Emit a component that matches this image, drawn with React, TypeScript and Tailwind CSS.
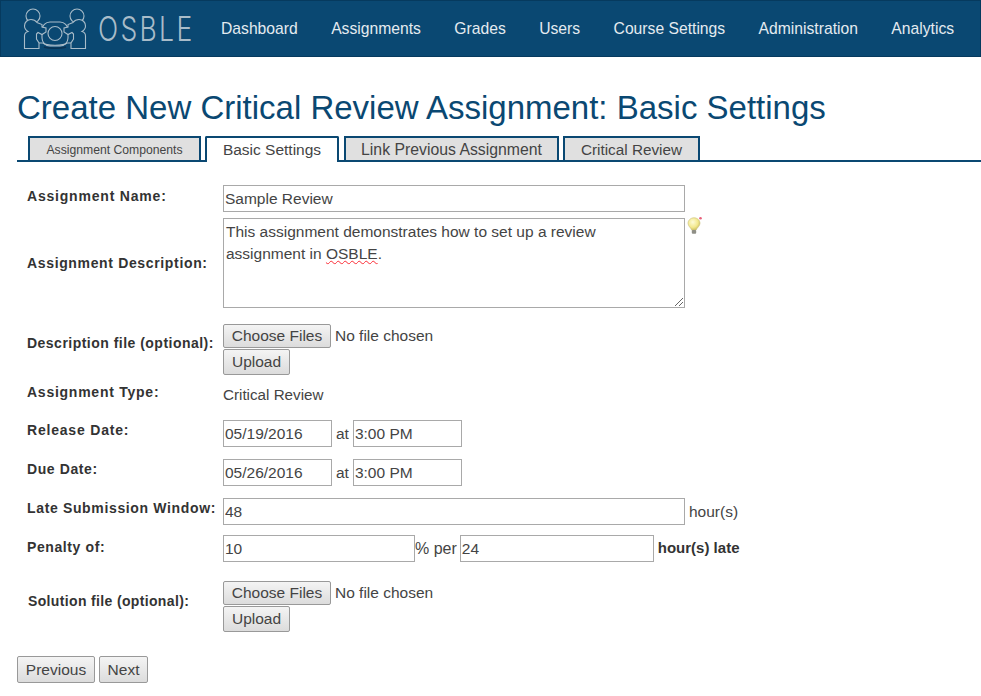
import React from "react";

const navItems = ["Dashboard", "Assignments", "Grades", "Users", "Course Settings", "Administration", "Analytics"];

function Logo() {
  return (
    <svg width="66" height="42" viewBox="23 7 66 42" fill="none" stroke="#a9bcc9" strokeWidth="1.1" className="shrink-0">
      <circle cx="33" cy="15" r="7" />
      <circle cx="77" cy="15" r="7" />
      <rect x="42" y="21" width="26" height="24" rx="8" />
      <circle cx="55" cy="32.5" r="7" />
      <path d="M39 47.5H24.500V35C24.500 32 26 31 28 30.500C25.500 29 24.500 27 24.500 25C24.500 21 27.500 18.500 31 18.500C33.500 18.500 35.500 19.500 37 21.500L42 23.500V26L46 27V31L42 33.500L38 31.500L36.500 33V38L39 42Z" fill="#0a4872" />
      <path d="M71 47.500H85.500V35C85.500 32 84 31 82 30.500C84.500 29 85.500 27 85.500 25C85.500 21 82.500 18.500 79 18.500C76.500 18.500 74.500 19.500 73 21.500L68 23.500V26L64 27V31L68 33.500L72 31.500L73.500 33V38L71 42Z" fill="#0a4872" />
      <path d="M39 42H43C46 45 64 45 67 42H71" />
      <path d="M44 46C48 47.500 62 47.500 66 46" stroke="#0a3354" strokeWidth="1.500" />
    </svg>
  );
}

function Bulb() {
  return (
    <svg width="17" height="18" viewBox="0 0 17 18" className="ml-[1px] -mt-[1px] shrink-0 self-start">
      <defs>
        <radialGradient id="bulbGlow" cx="0.4" cy="0.35" r="0.7">
          <stop offset="0" stopColor="#fdfbd8" />
          <stop offset="0.6" stopColor="#f3e98e" />
          <stop offset="1" stopColor="#c4b85c" />
        </radialGradient>
      </defs>
      <path d="M8 0.800C4.600 0.800 2 3.300 2 6.300C2 9 4.600 10.500 5.800 13.200H10C11.200 10.500 14 9 14 6.300C14 3.300 11.400 0.800 8 0.800Z" fill="url(#bulbGlow)" stroke="#c9bd78" strokeWidth="0.600" />
      <rect x="5.800" y="13" width="4.400" height="3.800" rx="1" fill="#8f8f86" />
      <circle cx="14.500" cy="1.300" r="1.300" fill="#e8607a" />
    </svg>
  );
}

const inputCls = "h-[27px] border border-[#a9a9a9] bg-white px-[1px] text-[15.500px] text-[#444] outline-none";
const labelCls = "w-[223px] shrink-0 text-[14px] font-bold text-[#333] whitespace-nowrap";
const btnCls = "border border-[#999] rounded-[2px] bg-gradient-to-b from-[#f4f4f4] to-[#dcdcdc] text-[15.500px] text-[#444] leading-none";

function FileBlock() {
  return (
    <div className="flex flex-col items-start">
      <div className="flex items-center">
        <button type="button" className={`${btnCls} h-[24px] w-[108px]`}>Choose Files</button>
        <span className="ml-[4px] text-[15.500px] leading-[22px] text-[#444]">No file chosen</span>
      </div>
      <button type="button" className={`${btnCls} mt-[1px] h-[26px] w-[67px]`}>Upload</button>
    </div>
  );
}

function Tab({ label, w, active, size, ml }: { label: string; w: string; active?: boolean; size: string; ml: string }) {
  return (
    <div
      className={`${w} ${ml} ${size} flex items-center justify-center border-x-2 border-t-2 border-[#0a4872] pt-[2px] ${
        active ? "-mb-[2px] h-[26px] rounded-t-[2px] bg-white pb-[2px]" : "h-[24px] bg-[#e0e0e0]"
      } text-[#444]`}
    >
      {label}
    </div>
  );
}

export default function App() {
  return (
    <div className="h-[696px] w-[981px] overflow-hidden bg-white font-['Liberation_Sans',Arial,sans-serif]">
      <header className="flex h-[57px] items-center border border-[#063a5e] bg-[#0a4872]">
        <div className="ml-[22px] flex w-[198px] shrink-0 items-center">
          <Logo />
          <span className="ml-[9px] origin-left scale-x-[0.78] font-['Inter',sans-serif] text-[34px] font-light leading-none tracking-[3px] text-[#a9bcc9]">OSBLE</span>
        </div>
        <nav className="flex gap-[33.400px] text-[15.700px] text-[#e4ebf0]">
          {navItems.map((n) => (
            <span key={n}>{n}</span>
          ))}
        </nav>
      </header>

      <h1 className="ml-[17px] mt-[31px] text-[33px] leading-[40px] text-[#0a4872]">
        Create New Critical Review Assignment: Basic Settings
      </h1>

      <div className="ml-[17px] mt-[8px] flex items-end border-b-2 border-[#0a4872]">
        <Tab label="Assignment Components" w="w-[173px]" size="text-[12.200px]" ml="ml-[11px]" />
        <Tab label="Basic Settings" w="w-[134px]" size="text-[15.500px]" active ml="ml-[4px]" />
        <Tab label="Link Previous Assignment" w="w-[215px]" size="text-[15.800px]" ml="ml-[5px]" />
        <Tab label="Critical Review" w="w-[137px]" size="text-[15.300px]" ml="ml-[4px]" />
      </div>

      <form className="mt-[23px] flex flex-col">
        <div className="flex items-start">
          <label className={`${labelCls} pl-[27px] pt-[1px] tracking-[0.8px]`}>Assignment Name:</label>
          <input className={`${inputCls} w-[462px]`} defaultValue="Sample Review" />
        </div>

        <div className="mt-[6px] flex items-center">
          <label className={`${labelCls} pl-[27px] tracking-[0.65px]`}>Assignment Description:</label>
          <div className="relative h-[90px] w-[462px] border border-[#a9a9a9] pl-[2px] pr-[17px] pt-[2px] text-[15.500px] leading-[21.500px] text-[#444]">
            This assignment demonstrates how to set up a review assignment in{" "}
            <span className="underline decoration-red-500 decoration-wavy decoration-1">OSBLE</span>.
            <svg width="10" height="10" viewBox="0 0 10 10" className="absolute bottom-0 right-0" stroke="#666" strokeWidth="1">
              <path d="M1 9L9 1M5 9L9 5" />
            </svg>
          </div>
          <Bulb />
        </div>

        <div className="mt-[16px] flex items-start">
          <label className={`${labelCls} pl-[27px] pt-[9px] tracking-[0.48px]`}>Description file (optional):</label>
          <FileBlock />
        </div>

        <div className="mt-[5px] flex items-start">
          <label className={`${labelCls} pl-[27px] pt-[2px] tracking-[0.75px]`}>Assignment Type:</label>
          <span className="pt-[3px] text-[15.200px] leading-[23px] text-[#444]">Critical Review</span>
        </div>

        <div className="mt-[14px] flex items-start">
          <label className={`${labelCls} pl-[27px] tracking-[0.8px]`}>Release Date:</label>
          <input className={`${inputCls} w-[109px]`} defaultValue="05/19/2016" />
          <span className="mx-[4px] self-center text-[15.500px] text-[#444]">at</span>
          <input className={`${inputCls} w-[109px]`} defaultValue="3:00 PM" />
        </div>

        <div className="mt-[12px] flex items-start">
          <label className={`${labelCls} pl-[27px] tracking-[0.6px]`}>Due Date:</label>
          <input className={`${inputCls} w-[109px]`} defaultValue="05/26/2016" />
          <span className="mx-[4px] self-center text-[15.500px] text-[#444]">at</span>
          <input className={`${inputCls} w-[109px]`} defaultValue="3:00 PM" />
        </div>

        <div className="mt-[12px] flex items-start">
          <label className={`${labelCls} pl-[27px] tracking-[0.65px]`}>Late Submission Window:</label>
          <input className={`${inputCls} w-[462px]`} defaultValue="48" />
          <span className="ml-[4px] self-center text-[15.500px] text-[#444]">hour(s)</span>
        </div>

        <div className="mt-[10px] flex items-start">
          <label className={`${labelCls} pl-[27px] pt-[2px] tracking-[0.6px]`}>Penalty of:</label>
          <input className={`${inputCls} w-[192px]`} defaultValue="10" />
          <span className="mr-[3px] self-center text-[16px] text-[#444]">% per</span>
          <input className={`${inputCls} w-[194px]`} defaultValue="24" />
          <span className="ml-[4px] self-center text-[15px] font-bold text-[#333]">hour(s) late</span>
        </div>

        <div className="mt-[19px] flex items-start">
          <label className={`${labelCls} pl-[28px] pt-[10px] tracking-[0.35px]`}>Solution file (optional):</label>
          <FileBlock />
        </div>

        <div className="ml-[17px] mt-[24px] flex gap-[4px]">
          <button type="button" className={`${btnCls} h-[27px] w-[78px]`}>Previous</button>
          <button type="button" className={`${btnCls} h-[27px] w-[49px]`}>Next</button>
        </div>
      </form>
    </div>
  );
}
